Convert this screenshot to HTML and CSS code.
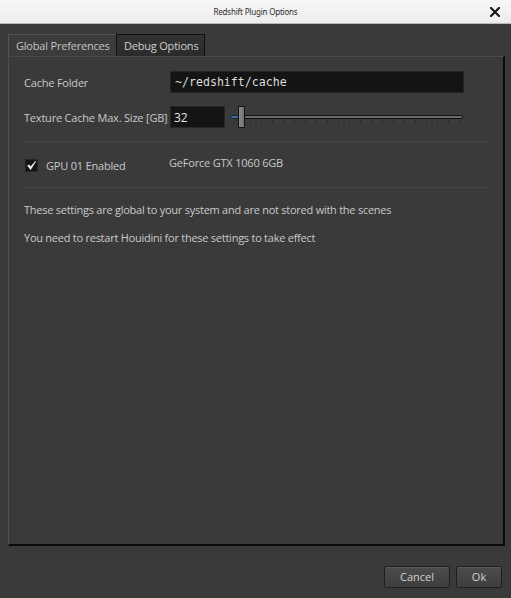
FILE: index.html
```html
<!DOCTYPE html>
<html>
<head>
<meta charset="utf-8">
<link rel="stylesheet" href="styles.css">
</head>
<body>
<div class="window">
  <div class="titlebar">
    <span class="title">Redshift Plugin Options</span>
    <span class="close">
      <svg width="10" height="10" viewBox="0 0 10 10"><path d="M1 1 L9 9 M9 1 L1 9" stroke="#1a1a1a" stroke-width="2.2" stroke-linecap="square"/></svg>
    </span>
  </div>
  <div class="body">
    <div class="tabs">
      <div class="tab active">Global Preferences</div>
      <div class="tab">Debug Options</div>
    </div>
    <div class="panel">
      <div class="row">
        <span class="label">Cache Folder</span>
        <div class="field wide">~/redshift/cache</div>
      </div>
      <div class="row">
        <span class="label">Texture Cache Max. Size [GB]</span>
        <div class="field short">32</div>
        <div class="slider">
          <div class="fill"></div>
          <div class="track"></div>
          <div class="ticks"></div>
          <div class="handle"></div>
        </div>
      </div>
      <div class="sep"></div>
      <div class="gpu">
        <span class="check">
          <svg width="11" height="11" viewBox="0 0 11 11"><path d="M1.2 5.6 L3.2 4.6 L4.6 6.6 L9.6 0.8 L10 1.6 L4.6 10 Z" fill="#f2f2f2"/></svg>
        </span>
        <span class="gpu-label">GPU 01 Enabled</span>
        <span class="gpu-name">GeForce GTX 1060 6GB</span>
      </div>
      <div class="sep"></div>
      <p class="note">These settings are global to your system and are not stored with the scenes</p>
      <p class="note">You need to restart Houidini for these settings to take effect</p>
    </div>
    <div class="buttons">
      <button class="btn cancel">Cancel</button>
      <button class="btn ok">Ok</button>
    </div>
  </div>
</div>
</body>
</html>
```
FILE: styles.css
```css
html, body {
  margin: 0;
  padding: 0;
  background: #3a3a3a;
}

.window {
  width: 511px;
  height: 598px;
  display: flex;
  flex-direction: column;
  font-family: "Open Sans", "Liberation Sans", sans-serif;
  color: #c9c9c9;
  font-size: 11px;
}

.titlebar {
  height: 24px;
  flex: none;
  background: linear-gradient(#f8f8f8, #ececec);
  border-bottom: 1px solid #b8b8b8;
  display: flex;
  align-items: center;
  justify-content: center;
  position: relative;
  box-sizing: border-box;
}

.title {
  font-family: "Noto Sans", sans-serif;
  font-size: 8px;
  letter-spacing: -0.2px;
  color: #2c2c2c;
  -webkit-font-smoothing: antialiased;
}

.close {
  position: absolute;
  right: 11px;
  top: 7px;
  display: flex;
}

.body {
  flex: 1;
  display: flex;
  flex-direction: column;
  padding: 10px 6px 10px 8px;
  background: #3a3a3a;
}

.tabs {
  display: flex;
  height: 22px;
}

.tab {
  box-sizing: border-box;
  height: 22px;
  padding: 3px 0 0 7px;
  font-size: 11px;
  white-space: nowrap;
  letter-spacing: -0.2px;
  color: #c4c4c4;
}

.tab.active {
  width: 108px;
  background: #3c3c3c;
  border-top: 1px solid #555;
  border-left: 1px solid #555;
}

.tab:not(.active) {
  width: 89px;
  background: linear-gradient(#333, #2b2b2b);
  border: 1px solid #101010;
  border-bottom: none;
  color: #cfcfcf;
}

.panel {
  height: 490px;
  box-sizing: border-box;
  border-left: 1px solid #505050;
  border-top: 1px solid #4a4a4a;
  border-right: 2px solid #0a0a0a;
  border-bottom: 2px solid #0a0a0a;
  background: #3a3a3a;
  padding: 14px 14px 0 15px;
}

.row {
  display: flex;
  align-items: center;
  height: 22px;
  margin-bottom: 13px;
}

.label {
  width: 146px;
  flex: none;
  font-size: 11px;
  white-space: nowrap;
  letter-spacing: -0.2px;
}

.field {
  box-sizing: border-box;
  height: 22px;
  background: #141414;
  border: 1px solid #262626;
  color: #e6e6e6;
  display: flex;
  align-items: center;
  padding-left: 4px;
}

.field.wide {
  width: 294px;
  font-family: "DejaVu Sans Mono", "Liberation Mono", monospace;
  font-size: 11.6px;
  color: #dcdcdc;
}

.field.short {
  width: 55px;
  font-size: 12px;
  padding-left: 3px;
}

.slider {
  position: relative;
  width: 235px;
  height: 22px;
  margin-left: 4px;
}

.track {
  position: absolute;
  left: 14px;
  right: 1px;
  top: 9px;
  height: 4px;
  background: #6a6a6a;
  border: 1px solid #111;
  border-radius: 2px;
  box-sizing: border-box;
}

.fill {
  position: absolute;
  left: 1px;
  width: 14px;
  top: 9px;
  height: 4px;
  background: #3f6a93;
  border: 1px solid #1a2530;
  box-sizing: border-box;
  border-radius: 2px 0 0 2px;
}

.ticks {
  position: absolute;
  left: 10px;
  right: 2px;
  top: 15px;
  height: 2px;
  background: repeating-linear-gradient(90deg, #1a1a1a 0 1px, transparent 1px 11px);
  opacity: 0.8;
}

.handle {
  position: absolute;
  left: 9px;
  top: 0;
  width: 7px;
  height: 22px;
  box-sizing: border-box;
  background: linear-gradient(90deg, #8a8a8a, #727272);
  border: 1px solid #111;
  border-radius: 1px;
}

.sep {
  height: 1px;
  background: #444;
  width: 466px;
}

.gpu {
  display: flex;
  align-items: center;
  height: 45px;
}

.check {
  width: 13px;
  height: 13px;
  background: #141414;
  border: 1px solid #262626;
  box-sizing: border-box;
  display: flex;
  align-items: center;
  justify-content: center;
  margin-left: 1px;
  margin-top: 1px;
}

.gpu-label {
  margin-left: 8px;
  width: 123px;
  margin-top: 2px;
  letter-spacing: -0.2px;
}

.gpu-name {
  margin-top: -4px;
  letter-spacing: -0.2px;
}

.note {
  margin: 14px 0 0 0;
  font-size: 11px;
  line-height: 15px;
  letter-spacing: -0.25px;
}

.note + .note {
  margin-top: 13px;
}

.buttons {
  display: flex;
  justify-content: flex-end;
  gap: 6px;
  margin-top: 20px;
  padding-right: 3px;
}

.btn {
  height: 22px;
  box-sizing: border-box;
  background: linear-gradient(#4c4c4c, #3e3e3e);
  border: 1px solid #1e1e1e;
  border-radius: 2px;
  color: #d0d0d0;
  font-family: "Open Sans", "Liberation Sans", sans-serif;
  font-size: 11px;
  padding: 0 0 1px 0;
  box-shadow: inset 0 1px 0 #5a5a5a;
}

.btn.cancel { width: 66px; }
.btn.ok { width: 46px; }
```
